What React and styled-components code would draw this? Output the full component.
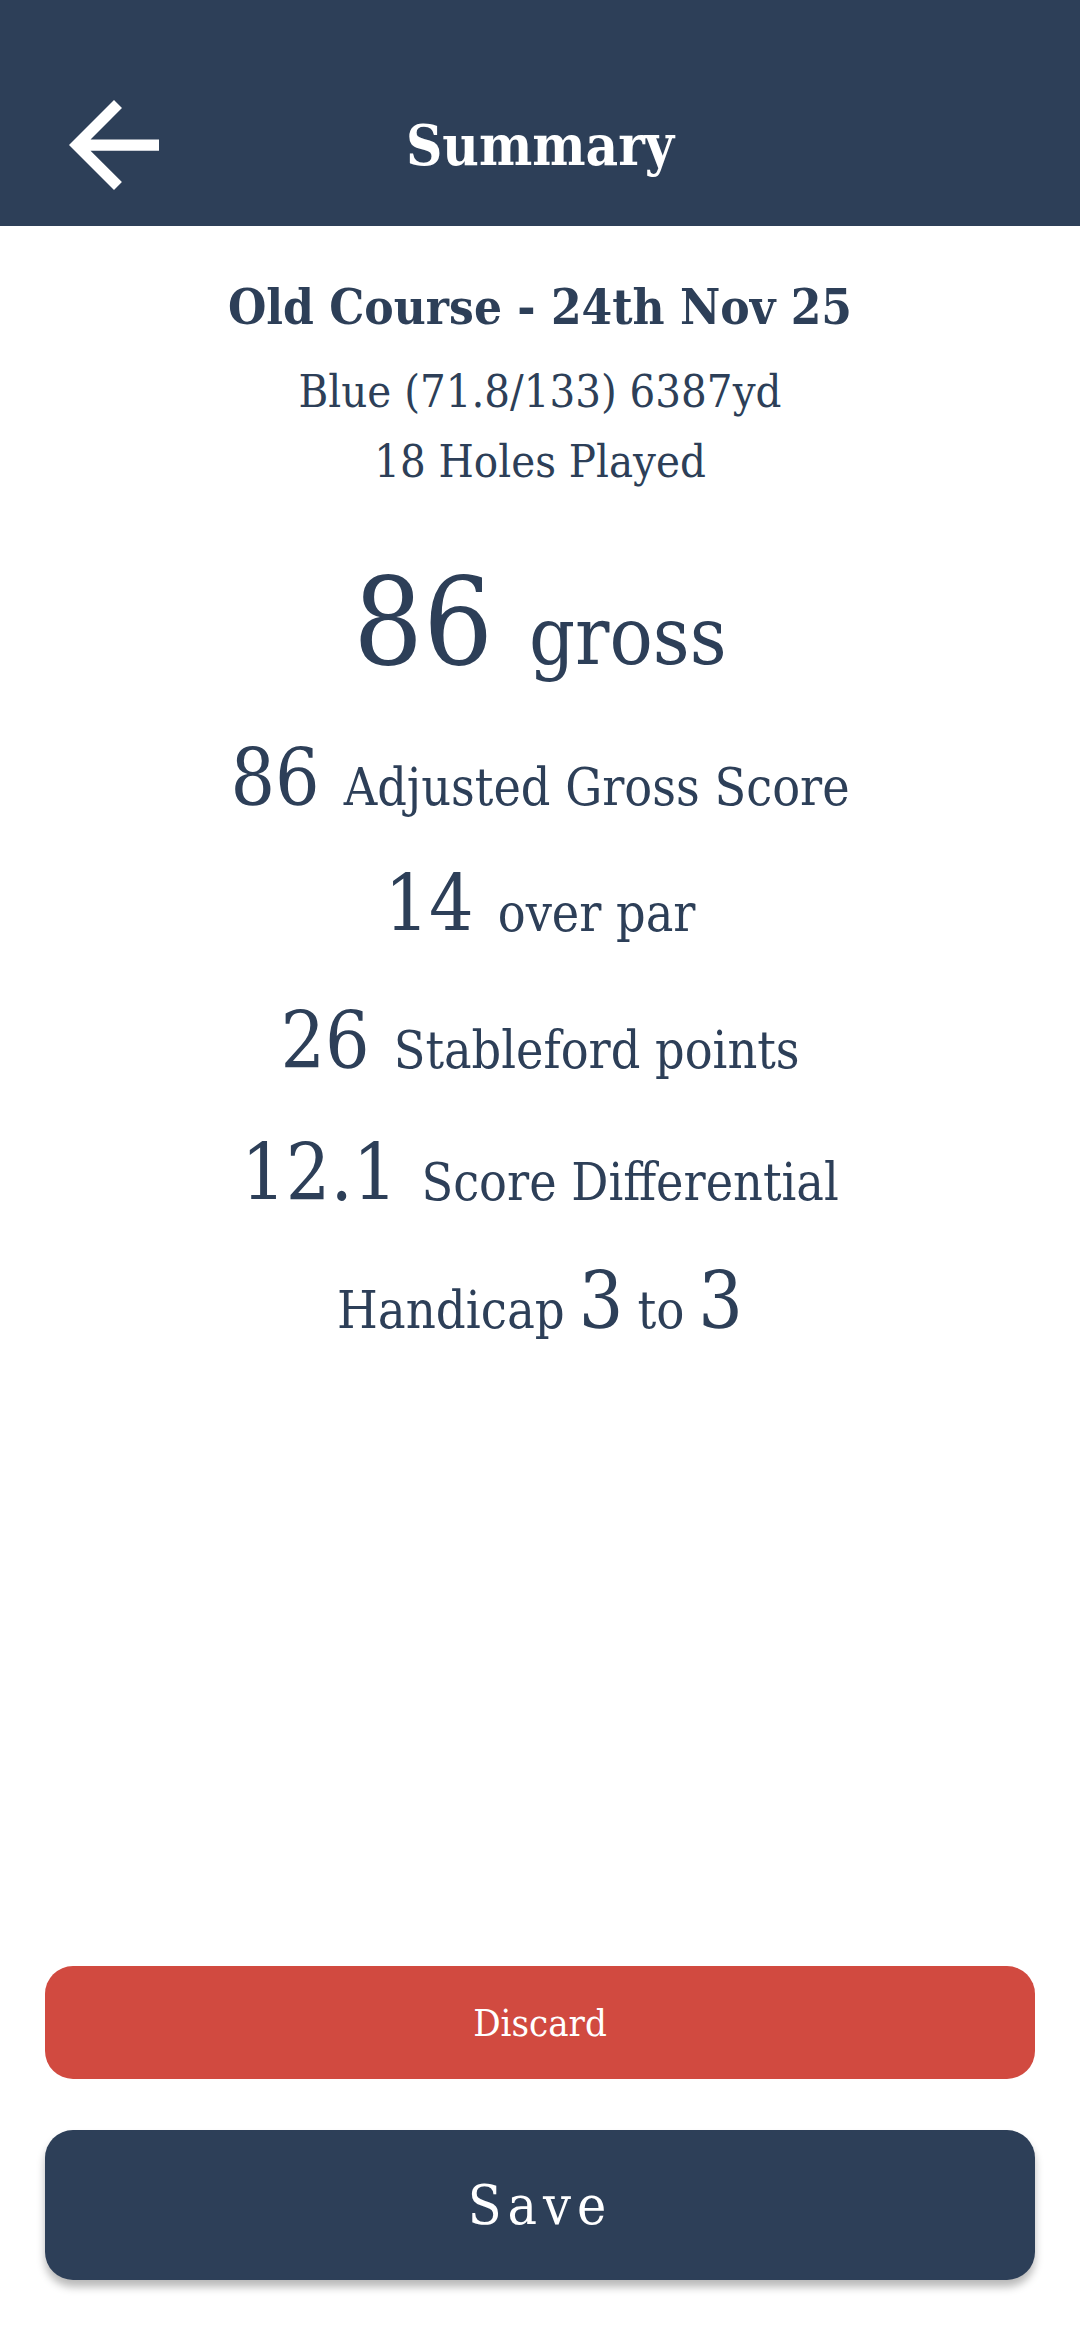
import React from "react";
import styled, { createGlobalStyle } from "styled-components";

const NAVY = "#2d3f58";
const RED = "#d14a40";
const FONT = `"DejaVu Serif Condensed", "DejaVu Serif", "Liberation Serif", serif`;

const Global = createGlobalStyle`
  html, body { margin: 0; padding: 0; background: #fff; }
  body { font-family: ${FONT}; color: ${NAVY}; }
  * { box-sizing: border-box; }
`;

const Page = styled.div`
  width: 1080px;
  min-height: 2340px;
  display: flex;
  flex-direction: column;
  background: #fff;
`;

const Header = styled.header`
  height: 226px;
  padding-top: 64px;
  background: ${NAVY};
  display: grid;
  grid-template-columns: 1fr auto 1fr;
  align-items: center;
`;

const BackButton = styled.button`
  justify-self: start;
  margin-left: 69px;
  padding: 0;
  border: 0;
  background: none;
  width: 90px;
  height: 90px;
  display: flex;
  color: #fff;
  svg { width: 90px; height: 90px; display: block; }
`;

const Title = styled.h1`
  margin: 0;
  font-family: ${FONT};
  font-weight: 700;
  font-size: 56px;
  color: #fff;
  line-height: 1;
`;

const Content = styled.main`
  flex: 1;
  display: flex;
  flex-direction: column;
  align-items: center;
  padding-top: 41px;
`;

const CourseTitle = styled.div`
  font-weight: 700;
  font-size: 49px;
  line-height: 80px;
`;

const InfoLine = styled.div`
  font-size: 45px;
  line-height: 70px;
  margin-top: ${(p) => p.$mt || 0}px;
`;

const StatRow = styled.div`
  display: flex;
  align-items: baseline;
  justify-content: center;
  gap: ${(p) => p.$gap}px;
  margin-top: ${(p) => p.$mt}px;
`;

const Num = styled.span`
  font-size: ${(p) => p.$size}px;
  line-height: 1;
`;

const Label = styled.span`
  font-size: ${(p) => p.$size}px;
  line-height: 1;
`;

const Footer = styled.footer`
  display: flex;
  flex-direction: column;
  gap: 51px;
  padding: 0 45px 60px;
`;

const Button = styled.button`
  width: 100%;
  height: ${(p) => p.$h}px;
  border: 0;
  border-radius: 28px;
  background: ${(p) => p.$bg};
  color: #fff;
  font-family: ${FONT};
  font-size: ${(p) => p.$fs}px;
  letter-spacing: ${(p) => p.$ls || 0}px;
  box-shadow: ${(p) => (p.$raised ? "0 7px 9px rgba(0,0,0,0.28)" : "none")};
  display: flex;
  align-items: center;
  justify-content: center;
`;

const BackIcon = () => (
  <svg viewBox="4 4 16 16" aria-hidden="true">
    <path fill="currentColor" d="M20 11H7.83l5.59-5.59L12 4l-8 8 8 8 1.41-1.41L7.83 13H20v-2z" />
  </svg>
);

const stats = [
  { num: "86", label: "Adjusted Gross Score", mt: 56 },
  { num: "14", label: "over par", mt: 48 },
  { num: "26", label: "Stableford points", mt: 59 },
  { num: "12.1", label: "Score Differential", mt: 54 },
];

export default function App() {
  return (
    <>
      <Global />
      <Page>
        <Header>
          <BackButton aria-label="Back">
            <BackIcon />
          </BackButton>
          <Title>Summary</Title>
          <span />
        </Header>
        <Content>
          <CourseTitle>Old Course - 24th Nov 25</CourseTitle>
          <InfoLine $mt={10}>Blue (71.8/133) 6387yd</InfoLine>
          <InfoLine>18 Holes Played</InfoLine>
          <StatRow $mt={64} $gap={36}>
            <Num $size={122}>86</Num>
            <Label $size={80}>gross</Label>
          </StatRow>
          {stats.map((s) => (
            <StatRow key={s.label} $mt={s.mt} $gap={24}>
              <Num $size={78}>{s.num}</Num>
              <Label $size={51.5}>{s.label}</Label>
            </StatRow>
          ))}
          <StatRow $mt={50} $gap={14}>
            <Label $size={52}>Handicap</Label>
            <Num $size={78}>3</Num>
            <Label $size={52}>to</Label>
            <Num $size={78}>3</Num>
          </StatRow>
        </Content>
        <Footer>
          <Button $h={113} $bg={RED} $fs={38}>Discard</Button>
          <Button $h={150} $bg={NAVY} $fs={55} $ls={6} $raised>Save</Button>
        </Footer>
      </Page>
    </>
  );
}
